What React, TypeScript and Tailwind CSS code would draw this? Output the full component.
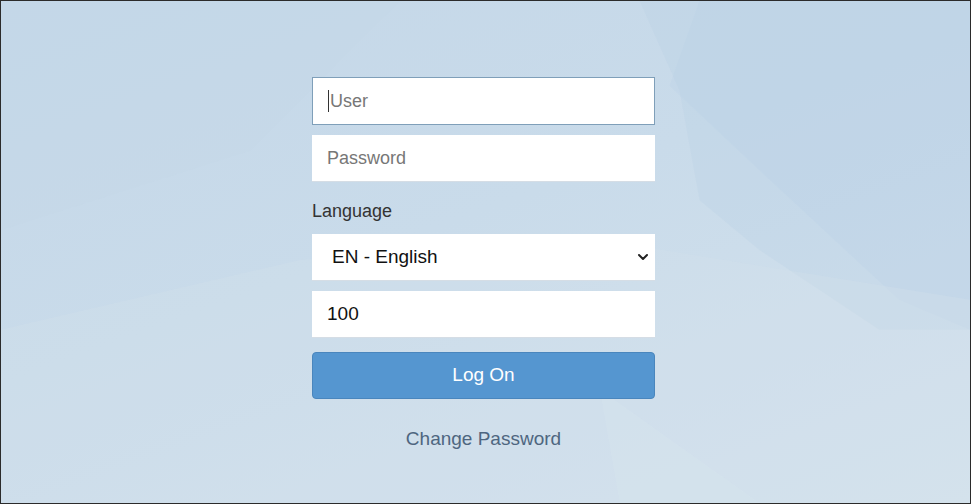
import React from "react";

export default function App() {
  return (
    <div
      className="relative w-[971px] h-[504px] overflow-hidden border border-[#2b2b2b] bg-[linear-gradient(160deg,#c4d7e8_0%,#c9dbea_45%,#d4e2ed_100%)]"
      style={{ fontFamily: '"Liberation Sans", Arial, sans-serif' }}
    >
      <svg className="absolute inset-0 w-full h-full pointer-events-none" viewBox="0 0 971 504" preserveAspectRatio="none">
        <polygon points="640,0 971,0 971,330 880,330 820,290 760,250 700,200 680,90" fill="#b8cfe5" opacity="0.3" />
        <polygon points="670,85 760,170 900,300 971,330 971,0 700,0" fill="#b6cde4" opacity="0.2" />
        <polygon points="0,330 300,260 600,240 971,300 971,504 0,504" fill="#d3e1ec" opacity="0.3" />
        <polygon points="600,390 760,504 620,504" fill="#d8e4ee" opacity="0.35" />
        <polygon points="0,0 400,0 250,150 0,230" fill="#c3d6e8" opacity="0.25" />
      </svg>
      <div className="relative flex flex-col items-center pt-[76px] pr-[4px]">
        <div className="w-[343px] flex flex-col">
          <div className="h-[48px] bg-white border border-[#7f9fb9] flex items-center pl-[15px] text-[18px] text-[#777]">
            <span className="w-px h-[22px] bg-[#333] mr-px"></span>
            <span>User</span>
          </div>
          <div className="mt-[10px] h-[47px] bg-white border-b border-[#d5dde5] flex items-center pl-[15px] text-[18px] text-[#777]">
            Password
          </div>
          <div className="mt-[18px] text-[18px] text-[#333] leading-[22px]">Language</div>
          <div className="mt-[12px] h-[47px] bg-white border-b border-[#d5dde5] flex items-center pl-[20px] pr-[5px] justify-between text-[19px] text-[#111]">
            <span>EN - English</span>
            <svg width="14" height="14" viewBox="0 0 14 14">
              <path d="M3 5 L7 9 L11 5" fill="none" stroke="#222" strokeWidth="2" strokeLinecap="round" strokeLinejoin="round" />
            </svg>
          </div>
          <div className="mt-[10px] h-[47px] bg-white border-b border-[#d5dde5] flex items-center pl-[15px] text-[19px] text-[#111]">
            100
          </div>
          <div className="mt-[14px] h-[47px] bg-[#5596d0] border border-[#4a86bd] rounded-[4px] flex items-center justify-center text-[19px] text-white">
            Log On
          </div>
          <div className="mt-[26px] text-center text-[19px] text-[#4e6680]">Change Password</div>
        </div>
      </div>
    </div>
  );
}
